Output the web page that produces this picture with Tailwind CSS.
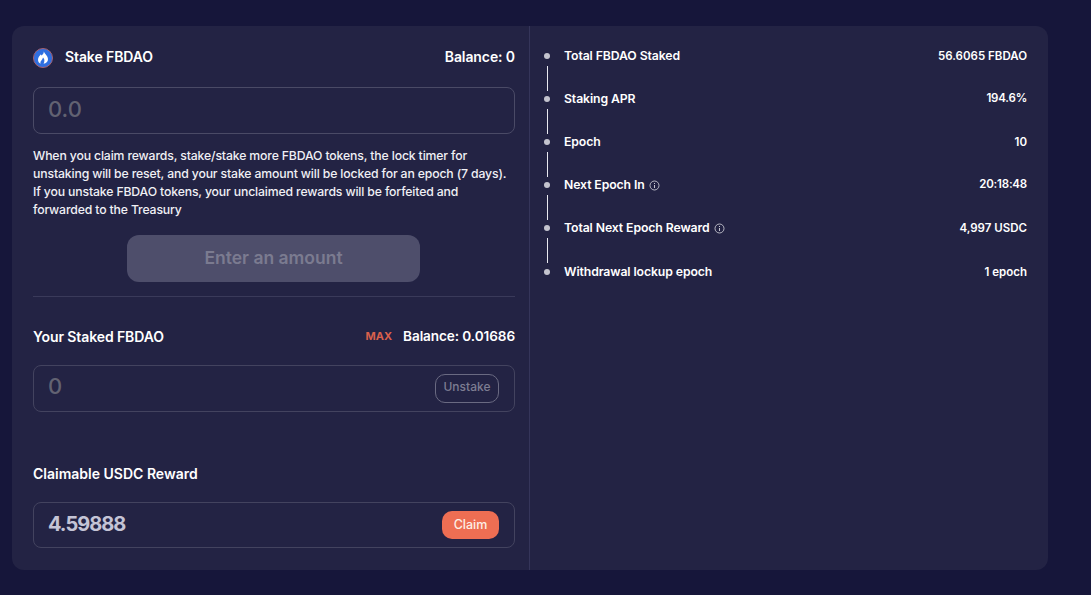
<!DOCTYPE html>
<html><head><meta charset="utf-8"><script src="https://cdn.jsdelivr.net/npm/@tailwindcss/browser@4"></script></head>
<body class="bg-[#16163a] font-['Inter',sans-serif] text-white antialiased">
<div class="w-[1091px] h-[595px] pt-[26px] pl-3 overflow-hidden">
<div class="w-[1036px] h-[544px] rounded-xl bg-[#232344] flex">
  <section class="w-[518px] shrink-0 border-r border-[#35355a] pl-[21px] pr-[14px] flex flex-col">
    <div class="h-[21px] mt-[21px] flex items-center justify-between">
      <div class="flex items-center gap-[12px]">
        <svg width="20" height="20" viewBox="0 0 20 20"><circle cx="10" cy="10" r="9.5" fill="#2f6fe0" stroke="#a8626e" stroke-width="1"/><path fill-rule="evenodd" d="M10.8 3.5C10.8 5.6 9.6 6.6 8.6 7.6C8.2 7.2 8 6.8 8 6.2C6.4 7.6 5 9.6 5 11.8C5 13.6 6 15 7.6 15.8C7.2 14.6 7.4 13.4 8.4 12.4C9.2 11.6 9.8 10.8 10 9.6C11 10.6 11.4 11.4 11.4 12.6C11.4 13.6 11.2 14.8 10.6 15.8C13 15.4 15 13.8 15 11.2C15 8 12 6.2 10.8 3.5Z" fill="#fff"/></svg>
        <span class="text-[14px] font-semibold tracking-[-0.1px] pb-[2px]">Stake FBDAO</span>
      </div>
      <span class="text-[14px] font-semibold tracking-[-0.1px] pb-[2px]">Balance: 0</span>
    </div>
    <div class="h-[47px] mt-[19px] rounded-lg border border-[#4a4a66] px-[14px] pb-[3px] flex items-center text-[22px] font-medium text-[#626272]">0.0</div>
    <p class="mt-[13px] h-[72px] text-[12.25px] leading-[18px] font-medium text-[#f0f0f5] tracking-[-0.15px] whitespace-nowrap">When you claim rewards, stake/stake more FBDAO tokens, the lock timer for<br>unstaking will be reset, and your stake amount will be locked for an epoch (7 days).<br>If you unstake FBDAO tokens, your unclaimed rewards will be forfeited and<br>forwarded to the Treasury</p>
    <div class="self-start ml-[94px] mt-[16px] w-[293px] h-[47px] rounded-xl bg-[#4e4e6b] flex items-center justify-center text-[17.5px] font-semibold text-[#7b7b90]">Enter an amount</div>
    <div class="mt-[14px] border-t border-[#3a3a5a]"></div>
    <div class="mt-[31px] h-[20px] pb-[3px] flex items-center justify-between">
      <span class="text-[14px] font-semibold tracking-[-0.1px]">Your Staked FBDAO</span>
      <div class="flex items-center gap-[11px]">
        <span class="text-[11px] font-bold text-[#d9604c]">MAX</span>
        <span class="text-[13.6px] font-semibold tracking-[-0.1px]">Balance: 0.01686</span>
      </div>
    </div>
    <div class="h-[47px] mt-[17px] rounded-lg border border-[#43435f] pl-[14px] pr-[15px] flex items-center justify-between">
      <span class="text-[22px] font-medium text-[#626272] pb-[4px]">0</span>
      <span class="w-[64px] h-[29px] pb-[3px] rounded-[10px] border border-[#6a6a82] flex items-center justify-center text-[12px] font-medium text-[#7d7d92]">Unstake</span>
    </div>
    <div class="mt-[53px] h-[20px] pb-[3px] flex items-center text-[14px] font-semibold">Claimable USDC Reward</div>
    <div class="h-[46px] mt-[17px] rounded-lg border border-[#43435f] pl-[14px] pr-[15px] flex items-center justify-between">
      <span class="text-[20px] font-bold tracking-[-1px] text-[#c4c4d6] pb-[2px]">4.59888</span>
      <span class="w-[57px] h-[28px] rounded-[10px] bg-[#ee6e53] flex items-center justify-center text-[12.5px] font-medium text-[#fdeee6]">Claim</span>
    </div>
  </section>
  <section class="flex-1 pl-[14px] pr-[21px] pt-[20px]">
    <div class="flex flex-col">
      <div class="h-[20px] flex items-center"><i class="w-[6px] h-[6px] rounded-full bg-[#c4c4cf] mr-[14px]"></i><span class="text-[12.25px] font-semibold tracking-[-0.1px] flex-1">Total FBDAO Staked</span><span class="text-[11.5px] font-semibold pt-px">56.6065 FBDAO</span></div>
      <div class="w-px h-[25px] mb-[-2px] ml-[3px] bg-[#e8e8f0]"></div>
      <div class="h-[20px] flex items-center"><i class="w-[6px] h-[6px] rounded-full bg-[#c4c4cf] mr-[14px]"></i><span class="text-[12.25px] font-semibold tracking-[-0.1px] flex-1">Staking APR</span><span class="text-[11.5px] tracking-[-0.2px] font-semibold">194.6%</span></div>
      <div class="w-px h-[25px] mb-[-2px] ml-[3px] bg-[#e8e8f0]"></div>
      <div class="h-[20px] flex items-center"><i class="w-[6px] h-[6px] rounded-full bg-[#c4c4cf] mr-[14px]"></i><span class="text-[12.25px] font-semibold tracking-[-0.1px] flex-1">Epoch</span><span class="text-[11.5px] font-semibold pt-px">10</span></div>
      <div class="w-px h-[25px] mb-[-2px] ml-[3px] bg-[#e8e8f0]"></div>
      <div class="h-[20px] flex items-center"><i class="w-[6px] h-[6px] rounded-full bg-[#c4c4cf] mr-[14px]"></i><span class="text-[12.25px] font-semibold tracking-[-0.1px]">Next Epoch In</span><svg class="ml-[4px]" width="11" height="11" viewBox="0 0 11 11" fill="none" stroke="#d8d8e0"><circle cx="5.5" cy="5.5" r="4.5" stroke-width=".8"/><path d="M5.5 5v3M5.5 3v1" stroke-width=".9"/></svg><span class="flex-1"></span><span class="text-[11.5px] tracking-[-0.2px] font-semibold">20:18:48</span></div>
      <div class="w-px h-[25px] mb-[-2px] ml-[3px] bg-[#e8e8f0]"></div>
      <div class="h-[20px] flex items-center"><i class="w-[6px] h-[6px] rounded-full bg-[#c4c4cf] mr-[14px]"></i><span class="text-[12.25px] font-semibold tracking-[-0.1px]">Total Next Epoch Reward</span><svg class="ml-[4px]" width="11" height="11" viewBox="0 0 11 11" fill="none" stroke="#d8d8e0"><circle cx="5.5" cy="5.5" r="4.5" stroke-width=".8"/><path d="M5.5 5v3M5.5 3v1" stroke-width=".9"/></svg><span class="flex-1"></span><span class="text-[11.5px] font-semibold pt-px">4,997 USDC</span></div>
      <div class="w-px h-[25px] mb-[-1px] ml-[3px] bg-[#e8e8f0]"></div>
      <div class="h-[20px] flex items-center"><i class="w-[6px] h-[6px] rounded-full bg-[#c4c4cf] mr-[14px]"></i><span class="text-[12.25px] font-semibold tracking-[-0.1px] flex-1">Withdrawal lockup epoch</span><span class="text-[11.5px] font-semibold pt-px">1 epoch</span></div>
    </div>
  </section>
</div>
</div>
</body></html>
